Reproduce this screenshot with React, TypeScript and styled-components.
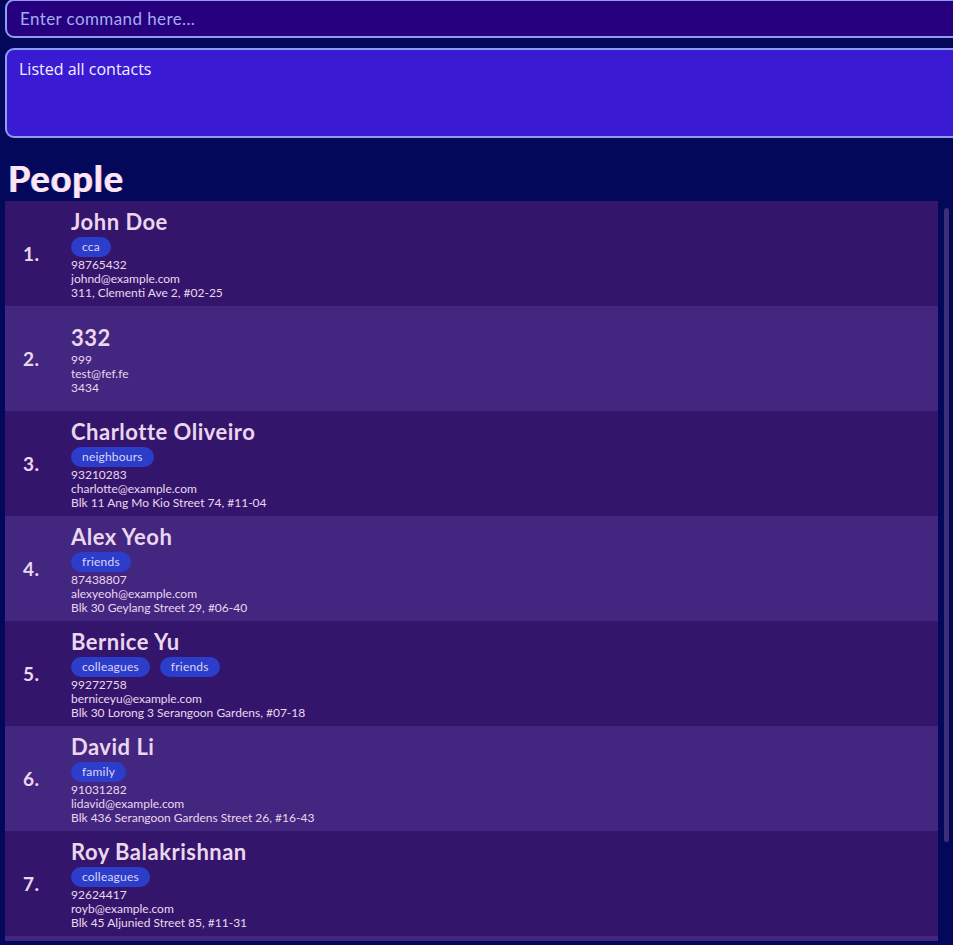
import React from "react";
import styled, { createGlobalStyle } from "styled-components";

const GlobalStyle = createGlobalStyle`
  html, body {
    margin: 0;
    padding: 0;
    background: #03085a;
    overflow: hidden;
  }
  #root {
    height: 945px;
  }
`;

const Page = styled.div`
  height: 945px;
  display: flex;
  flex-direction: column;
  padding-left: 5px;
  box-sizing: border-box;
  background: #03085a;
  font-family: "Lato", "Noto Sans", sans-serif;
  color: #ecd6ee;
  overflow: hidden;
`;

const CommandBox = styled.div`
  box-sizing: border-box;
  height: 39px;
  margin-top: -1px;
  margin-right: -12px;
  border: 2px solid #8e9cf2;
  border-radius: 9px;
  background: #26007e;
  display: flex;
  align-items: center;
  padding-left: 13px;
  font-size: 17px;
  letter-spacing: 0.4px;
  color: #a4adf2;
`;

const ResultBox = styled.div`
  box-sizing: border-box;
  height: 90px;
  margin-top: 10px;
  margin-right: -12px;
  border: 2px solid #8e9cf2;
  border-radius: 9px;
  background: #3a1ad2;
  padding: 8px 12px;
  font-family: "Open Sans", "Noto Sans", sans-serif;
  font-size: 16px;
  color: #f2f0ff;
`;

const Title = styled.h1`
  margin: 17px 0 0 3px;
  height: 46px;
  font-size: 36px;
  font-weight: 700;
  letter-spacing: 1px;
  line-height: 46px;
  color: #fde6f2;
  text-shadow: -0.6px 0 #9ab6ff, 0.6px 0 #ffb0d0;
`;

const ListArea = styled.div`
  display: flex;
  height: 740px;
`;

const Cards = styled.div`
  flex: 1;
  overflow: hidden;
  display: flex;
  flex-direction: column;
`;

const Track = styled.div`
  width: 15px;
  box-sizing: border-box;
  padding: 7px 4px 0 6px;
`;

const Thumb = styled.div`
  height: 634px;
  border-radius: 3px;
  background: #3b2f7a;
`;

const Card = styled.div<{ $even: boolean }>`
  flex: 0 0 105px;
  height: 105px;
  display: flex;
  align-items: center;
  background: ${(p) => (p.$even ? "#43267f" : "#33166c")};
`;

const Index = styled.div`
  width: 66px;
  flex: 0 0 66px;
  box-sizing: border-box;
  padding-left: 18px;
  font-size: 19px;
  font-weight: 700;
  letter-spacing: 0.5px;
  color: #ecd6ee;
`;

const Info = styled.div<{ $noTags: boolean }>`
  display: flex;
  flex-direction: column;
  padding-top: ${(p) => (p.$noTags ? "4px" : "2px")};
`;

const Name = styled.div`
  font-size: 22px;
  font-weight: 700;
  letter-spacing: 0.5px;
  line-height: 24px;
  color: #ecd6ee;
`;

const Tags = styled.div`
  display: flex;
  gap: 10px;
  margin: 3px 0 1px;
`;

const Tag = styled.span`
  height: 20px;
  line-height: 20px;
  padding: 0 11px;
  border-radius: 10px;
  background: #2c3ccb;
  font-size: 12px;
  letter-spacing: 0.2px;
  color: #dcd6f6;
`;

const Details = styled.div<{ $noTags: boolean }>`
  margin-top: ${(p) => (p.$noTags ? "3px" : "0")};
  font-size: 12px;
  line-height: 14px;
  color: #ecd6ee;
`;

type Person = {
  name: string;
  tags: string[];
  phone: string;
  email: string;
  address: string;
};

const people: Person[] = [
  { name: "John Doe", tags: ["cca"], phone: "98765432", email: "johnd@example.com", address: "311, Clementi Ave 2, #02-25" },
  { name: "332", tags: [], phone: "999", email: "test@fef.fe", address: "3434" },
  { name: "Charlotte Oliveiro", tags: ["neighbours"], phone: "93210283", email: "charlotte@example.com", address: "Blk 11 Ang Mo Kio Street 74, #11-04" },
  { name: "Alex Yeoh", tags: ["friends"], phone: "87438807", email: "alexyeoh@example.com", address: "Blk 30 Geylang Street 29, #06-40" },
  { name: "Bernice Yu", tags: ["colleagues", "friends"], phone: "99272758", email: "berniceyu@example.com", address: "Blk 30 Lorong 3 Serangoon Gardens, #07-18" },
  { name: "David Li", tags: ["family"], phone: "91031282", email: "lidavid@example.com", address: "Blk 436 Serangoon Gardens Street 26, #16-43" },
  { name: "Roy Balakrishnan", tags: ["colleagues"], phone: "92624417", email: "royb@example.com", address: "Blk 45 Aljunied Street 85, #11-31" },
  { name: "Irfan Ibrahim", tags: ["classmates"], phone: "92492021", email: "irfan@example.com", address: "Blk 47 Tampines Street 20, #17-35" },
];

export default function App() {
  return (
    <>
      <GlobalStyle />
      <Page>
        <CommandBox>Enter command here...</CommandBox>
        <ResultBox>Listed all contacts</ResultBox>
        <Title>People</Title>
        <ListArea>
          <Cards>
            {people.map((p, i) => {
              const noTags = p.tags.length === 0;
              return (
                <Card key={i} $even={i % 2 === 1}>
                  <Index>{i + 1}.</Index>
                  <Info $noTags={noTags}>
                    <Name>{p.name}</Name>
                    {!noTags && (
                      <Tags>
                        {p.tags.map((t) => (
                          <Tag key={t}>{t}</Tag>
                        ))}
                      </Tags>
                    )}
                    <Details $noTags={noTags}>
                      <div>{p.phone}</div>
                      <div>{p.email}</div>
                      <div>{p.address}</div>
                    </Details>
                  </Info>
                </Card>
              );
            })}
          </Cards>
          <Track>
            <Thumb />
          </Track>
        </ListArea>
      </Page>
    </>
  );
}
